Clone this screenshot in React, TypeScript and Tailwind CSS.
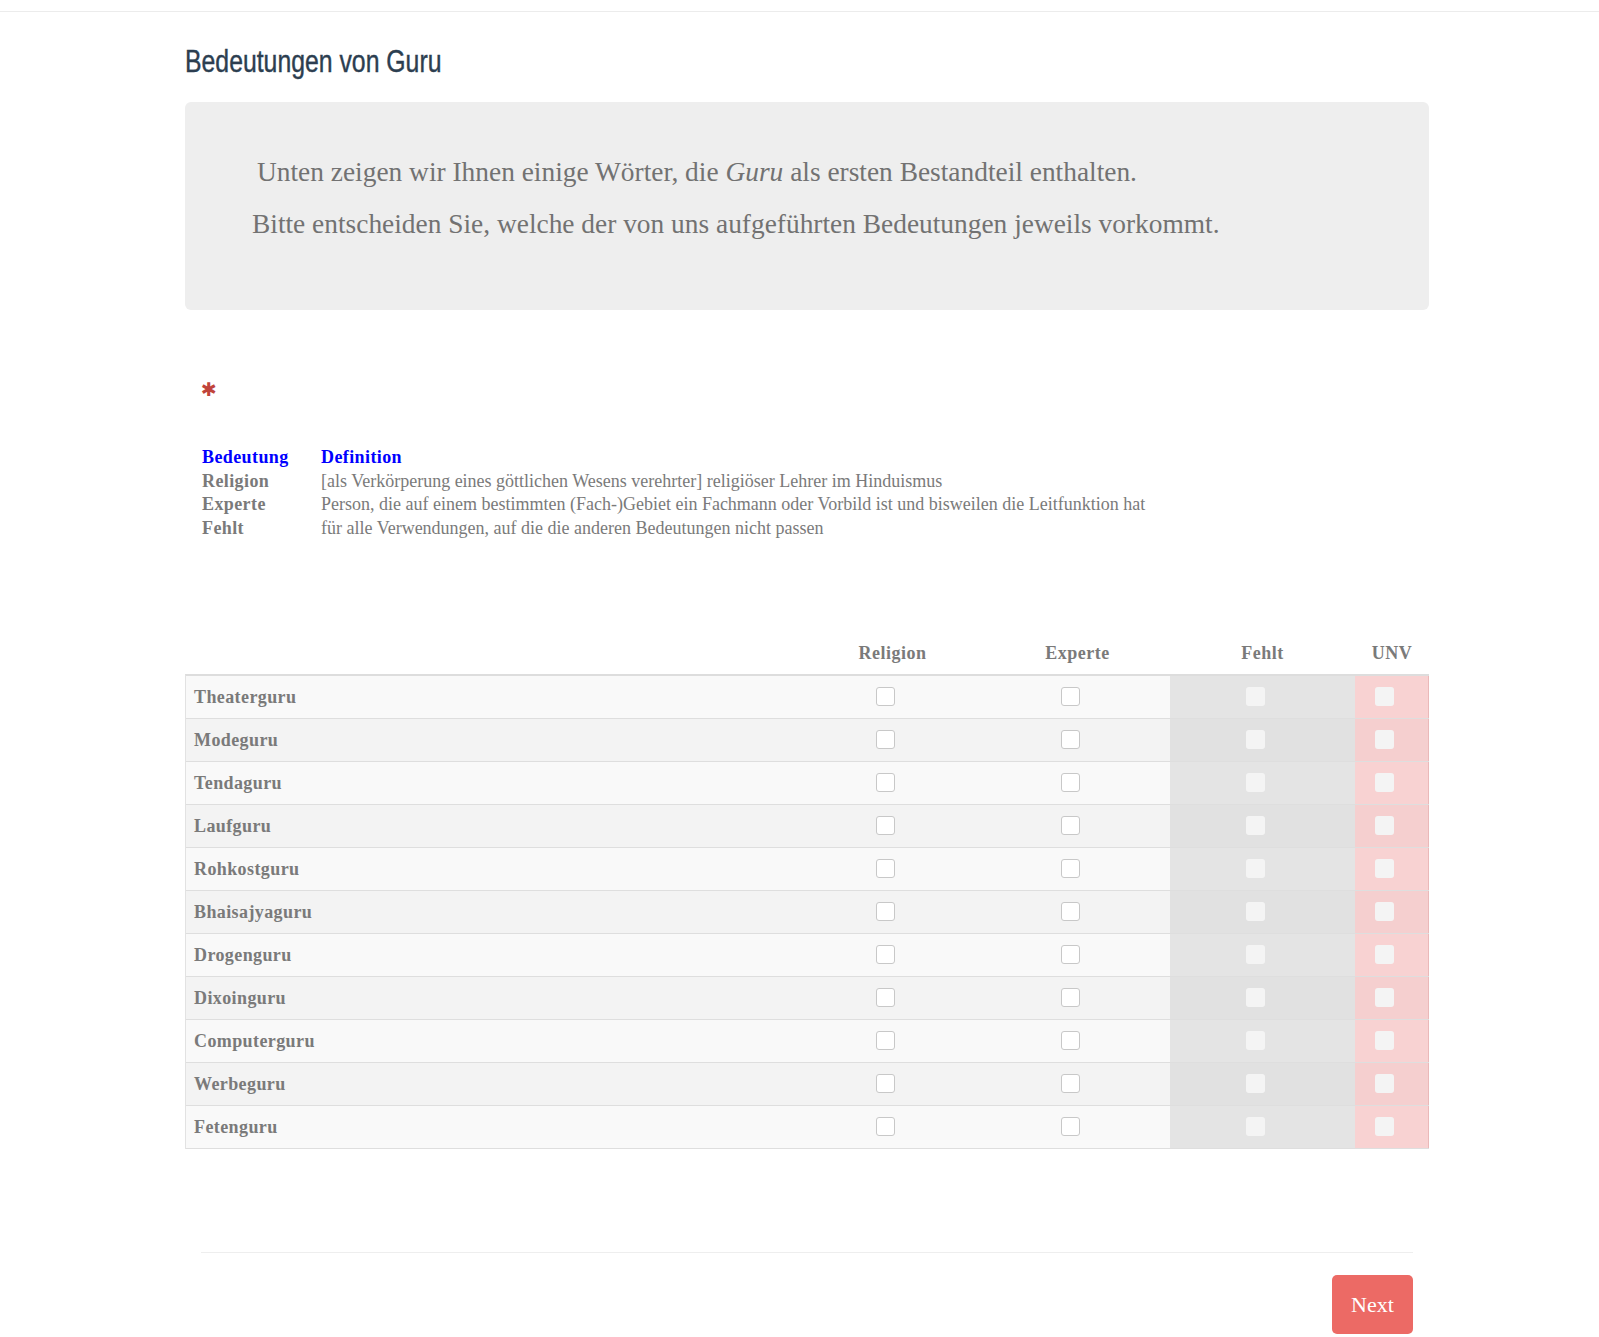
import { useState } from 'react';

const words = [
  'Theaterguru',
  'Modeguru',
  'Tendaguru',
  'Laufguru',
  'Rohkostguru',
  'Bhaisajyaguru',
  'Drogenguru',
  'Dixoinguru',
  'Computerguru',
  'Werbeguru',
  'Fetenguru',
];

const meanings = [
  ['Religion', '[als Verkörperung eines göttlichen Wesens verehrter] religiöser Lehrer im Hinduismus'],
  ['Experte', 'Person, die auf einem bestimmten (Fach-)Gebiet ein Fachmann oder Vorbild ist und bisweilen die Leitfunktion hat'],
  ['Fehlt', 'für alle Verwendungen, auf die die anderen Bedeutungen nicht passen'],
];

function Box({ checked, onClick }: { checked: boolean; onClick: () => void }) {
  return (
    <button
      type="button"
      onClick={onClick}
      className="w-[19px] h-[19px] rounded-[3px] border border-[#c8c8c8] bg-white mr-[14px] mb-[2px] flex items-center justify-center text-[12px] text-[#555] leading-none"
    >
      {checked ? '✓' : ''}
    </button>
  );
}

function DisabledBox() {
  return <div className="w-[19px] h-[19px] rounded-[3px] bg-[#f4f4f4] mr-[14px] mb-[2px]" />;
}

export default function App() {
  const [answers, setAnswers] = useState<Record<string, boolean>>({});

  const toggle = (key: string) => setAnswers((a) => ({ ...a, [key]: !a[key] }));

  return (
    <div className="min-h-screen bg-white font-['Liberation_Serif',serif] text-[#777]">
      <div className="h-[12px] border-b border-[#ececec]" />

      <div className="ml-[185px] w-[1244px]">
        <div className="pt-[30px] h-[90px]">
          <h1 className="inline-block origin-left scale-x-[0.8] text-[#2c3e50] text-[31px] leading-[40px] font-['Liberation_Sans',sans-serif] whitespace-nowrap [-webkit-text-stroke:0.4px_#2c3e50]">
            Bedeutungen von Guru
          </h1>
        </div>

        {/* Intro */}
        <div className="bg-[#eeeeee] rounded-[6px] h-[208px] pt-[53px] pl-[72px] text-[#727272] text-[27.4px] leading-[34px]">
          <p>
            Unten zeigen wir Ihnen einige Wörter, die <em>Guru</em> als ersten Bestandteil enthalten.
          </p>
          <p className="mt-[18px] -ml-[5px]">Bitte entscheiden Sie, welche der von uns aufgeführten Bedeutungen jeweils vorkommt.</p>
        </div>

        {/* Required marker */}
        <div className="pt-[69px] pl-[16px] h-[136px]">
          <span className="text-[#c0443b] text-[19px] leading-none font-['DejaVu_Sans',sans-serif]">✱</span>
        </div>

        {/* Meaning definitions */}
        <div className="pl-[17px] text-[18px] leading-[23.5px]">
          <div className="grid grid-cols-[119px_1fr] font-bold text-[#0000ff] tracking-[0.4px]">
            <span>Bedeutung</span>
            <span>Definition</span>
          </div>
          {meanings.map(([name, def]) => (
            <div key={name} className="grid grid-cols-[119px_1fr]">
              <span className="font-bold text-[#7a7a7a] tracking-[0.4px]">{name}</span>
              <span className="text-[#7a7a7a]">{def}</span>
            </div>
          ))}
        </div>

        {/* Matrix */}
        <div className="mt-[104px]">
          <div className="grid grid-cols-[615px_185px_185px_185px_74px] h-[30px] items-start font-bold text-[18px] tracking-[0.5px] text-[#7a7a7a] leading-[18px]">
            <span />
            <span className="text-center">Religion</span>
            <span className="text-center">Experte</span>
            <span className="text-center">Fehlt</span>
            <span className="text-center">UNV</span>
          </div>
          <div className="border-t-2 border-[#dddddd] border-l border-l-[#e2e2e2]">
            {words.map((w, i) => {
              const odd = i % 2 === 0;
              return (
                <div
                  key={w}
                  className={`grid grid-cols-[614px_185px_185px_185px_74px] h-[43px] border-b border-[#dedede] ${odd ? 'bg-[#f9f9f9]' : 'bg-[#f3f3f3]'}`}
                >
                  <div className="flex items-center pl-[8px] font-bold text-[18px] tracking-[0.4px] text-[#7a7a7a]">{w}</div>
                  <div className="flex items-center justify-center">
                    <Box checked={!!answers[w + 'r']} onClick={() => toggle(w + 'r')} />
                  </div>
                  <div className="flex items-center justify-center">
                    <Box checked={!!answers[w + 'e']} onClick={() => toggle(w + 'e')} />
                  </div>
                  <div className={`flex items-center justify-center ${odd ? 'bg-[#e4e4e4]' : 'bg-[#e1e1e1]'}`}>
                    <DisabledBox />
                  </div>
                  <div
                    className={`flex items-center justify-center border-r border-[#eab9b9] ${odd ? 'bg-[#f8d2d2]' : 'bg-[#f5cfcf]'}`}
                  >
                    <DisabledBox />
                  </div>
                </div>
              );
            })}
          </div>
        </div>

        {/* Footer */}
        <div className="mt-[103px] mx-[16px] border-t border-[#eeeeee]" />
        <div className="flex justify-end pr-[16px] pt-[22px]">
          <button
            type="button"
            className="w-[81px] h-[59px] rounded-[5px] bg-[#ec6a65] text-white text-[22px] leading-none"
          >
            Next
          </button>
        </div>
      </div>
    </div>
  );
}
